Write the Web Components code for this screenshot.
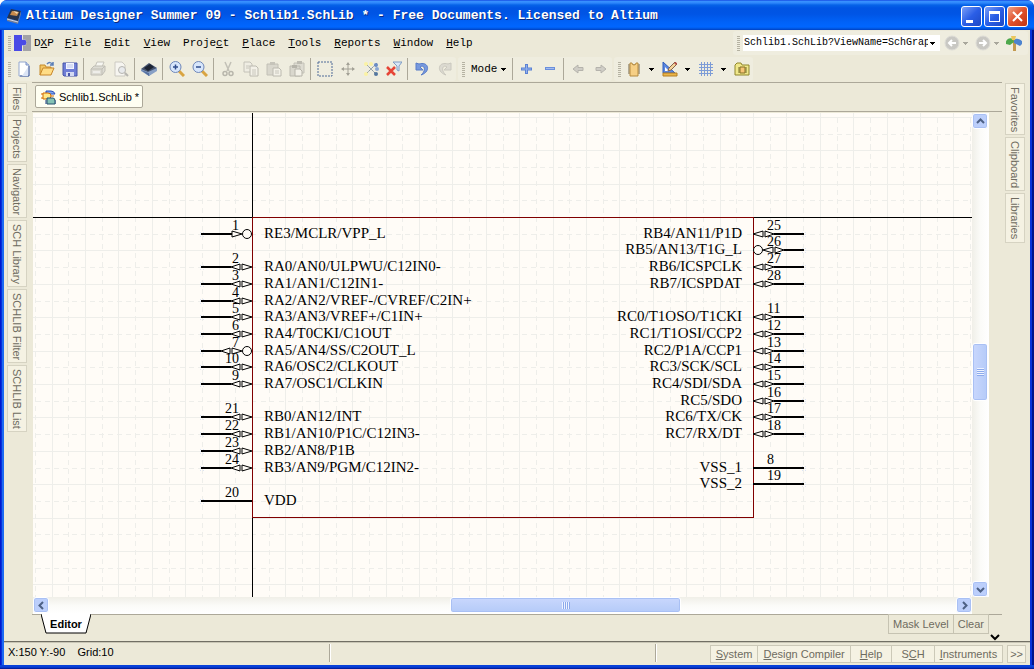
<!DOCTYPE html>
<html lang="en">
<head>
<meta charset="utf-8">
<title>Altium Designer Summer 09</title>
<style>
  html, body { margin: 0; height: 100%; }
  body { background: #fff; }
</style>
</head>
<body>
<app-window></app-window>

<script>
const ICONS = {
  app: `<path d="M1 10 5 1l10 2-3 10z" fill="#26324c"/><path d="M1 10l11 3 3-10v3l-3 10L1 13z" fill="#6d7c9b"/><path d="M6 3l7 1-2 4-7-1z" fill="#c98a4b"/><path d="M7 3l5 1-1 2z" fill="#f4d9b0"/><path d="M1 11l11 3" stroke="#cfd6e4" fill="none"/>`,
  dxp: `<path d="M0 0h8v5a3 3 0 1 1 0 5v6H0z" fill="#4a4ae6"/><path d="M9 0h8v16H9v-5a3.500 3.500 0 0 0 0-7z" fill="#a2a2a6"/>`,
  new: `<path d="M3 1h7l3 3v11H3z" fill="#fff" stroke="#93a7cf"/><path d="M13 5v10H4" stroke="#4a63a0" fill="none"/><path d="M10 1v3h3" fill="#c5d3ef" stroke="#7c92c4"/><path d="M6 15l6-9v9z" fill="#dbe4f5"/>`,
  open: `<path d="M1 14V4h5l1 2h5v2" fill="#f3c765" stroke="#c48a2a"/><path d="M1 14l3-7h11l-3 7z" fill="#ffdd86" stroke="#c8862a"/><path d="M8 3c2-2 4-2 6 1m0-3v3h-3" stroke="#5b7fb8" stroke-width="1.500" fill="none"/>`,
  save: `<path d="M1 2h14v13H2l-1-1z" fill="#6f7ed6" stroke="#4654a8"/><path d="M4 2h8v6H4z" fill="#f3f5ff"/><path d="M5 4h6M5 6h6" stroke="#b9c4ea"/><path d="M4 11h8v4H4z" fill="#d4daf2"/><path d="M6 12h2v3H6z" fill="#4654a8"/>`,
  print: `<path d="M5 6l2-5h7l-2 5" fill="#f7f7f2" stroke="#c6c4bb"/><path d="M1 8l3-3h11v5l-3 4H1z" fill="#dddcd4" stroke="#c0beb5"/><path d="M1 8h11v6M12 8l3-3" stroke="#c0beb5" fill="none"/><path d="M3 11h7" stroke="#fff"/>`,
  preview: `<path d="M2 1h7l3 3v11H2z" fill="#f6f5f0" stroke="#cccac2"/><circle cx="9" cy="9" r="3.500" fill="#e8eaec" stroke="#b6b5b0"/><path d="M12 12l3 3" stroke="#b6b5b0" stroke-width="2"/>`,
  browse: `<path d="M0 8l8-6 8 5-8 8z" fill="#45536f"/><path d="M3 7l6-4 4 3-6 4z" fill="#1d2433"/><path d="M0 8l7 3 9-4v3l-8 5-8-5z" fill="#88a0c6"/><path d="M0 9l8 3v3z" fill="#5570a0"/>`,
  zin: `<path d="M10 10l5 5" stroke="#d9a441" stroke-width="3"/><circle cx="6.500" cy="6" r="5.500" fill="#d7e6fb" stroke="#6f87b8"/><path d="M4 6h5M6.500 3.500v5" stroke="#2f4c8c" stroke-width="1.500"/>`,
  zout: `<path d="M10 10l5 5" stroke="#d9a441" stroke-width="3"/><circle cx="6.500" cy="6" r="5.500" fill="#d7e6fb" stroke="#6f87b8"/><path d="M4 6h5" stroke="#2f4c8c" stroke-width="1.500"/>`,
  cut: `<path d="M5 1l4 9M11 1l-4 9" stroke="#c2c0b6" stroke-width="1.500"/><circle cx="5" cy="12.500" r="2" fill="none" stroke="#b8b6ac" stroke-width="1.500"/><circle cx="11" cy="12.500" r="2" fill="none" stroke="#b8b6ac" stroke-width="1.500"/>`,
  copy: `<path d="M1 1h6l2 2v8H1z" fill="#efede3" stroke="#c4c2b8"/><path d="M7 5h6l2 2v8H7z" fill="#f3f1e8" stroke="#bcbab0"/><path d="M3 5h4M3 7h3M9 9h4M9 11h4M9 13h4" stroke="#c8c6bc"/>`,
  paste: `<path d="M1 3h11v11H1z" fill="#d9d7cd" stroke="#c2c0b6"/><path d="M4 1h5v3H4z" fill="#c6c4ba"/><path d="M7 7h6l2 2v6H7z" fill="#f3f1e8" stroke="#bcbab0"/><path d="M9 10h4M9 12h4" stroke="#c8c6bc"/>`,
  paste2: `<path d="M5 2h10v10H5z" fill="#dedcd2" stroke="#c4c2b8"/><path d="M8 0h5v3H8z" fill="#bebcb2"/><path d="M1 5h10v10H1z" fill="#d9d7cd" stroke="#bcbab0"/><path d="M3 4h5v3H3z" fill="#b6b4aa"/><path d="M6 8h5l2 2v5H6z" fill="#f3f1e8" stroke="#b6b4aa"/>`,
  select: `<path d="M1 1h14v14H1z" fill="none" stroke="#4e6b98" stroke-dasharray="2 1"/>`,
  move: `<path d="M8 2v12M2 8h12" stroke="#a3a196"/><path d="M6 4l2-3 2 3zM6 12l2 3 2-3zM4 6L1 8l3 2zM12 6l3 2-3 2z" fill="#a3a196"/>`,
  desel: `<path d="M2 2l6 6-6 6M14 2L8 8l6 6" stroke="#6d8092" stroke-dasharray="2 1" fill="none"/><circle cx="3" cy="3" r="2" fill="#fbf2a4"/><circle cx="3" cy="13" r="2" fill="#fbf2a4"/><circle cx="8" cy="3" r="2" fill="#fbf2a4"/><circle cx="13" cy="4" r="2" fill="#6b8cc4"/><circle cx="14" cy="8" r="2" fill="#8ba7d3"/><circle cx="13" cy="13" r="2" fill="#54779f"/>`,
  clear: `<path d="M7 1h9l-3 4v5l-2-1V5z" fill="#d9e6f7" stroke="#7e9cc4"/><path d="M1 6l8 8M9 6l-8 8" stroke="#e64436" stroke-width="2.500"/>`,
  undo: `<path d="M2 2v7h7L6 6c4-3 7 3 1 8 10-3 8-14-2-11z" fill="#7799de" stroke="#587cc8"/>`,
  redo: `<path d="M14 2v7H7l3-3C6 3 3 9 9 14-1 11 1 0 11 3z" fill="#dcdad1" stroke="#cac8be"/>`,
  plus: `<path d="M6 3h3v3.500h4v3H9V13H6V9.500H2v-3h4z" fill="#5b82d4"/><path d="M7.500 4v8M3 8h9" stroke="#93b1ec"/>`,
  minus: `<path d="M3 6h10v3H3z" fill="#6a8fdc"/><path d="M4 7.500h8" stroke="#a3bcee"/>`,
  left: `<path d="M3 8l5-4v2.500h5v3H8V12z" fill="#cfcdc6" stroke="#b5b3ac"/>`,
  right: `<path d="M13 8L8 4v2.500H3v3h5V12z" fill="#cfcdc6" stroke="#b5b3ac"/>`,
  part: `<path d="M2 4h12M2 6h12M2 8h12M2 10h12M2 12h12" stroke="#75664a"/><path d="M4 2h2a2 2 0 0 0 4 0h2v13H4z" fill="#f6cf85" stroke="#b58a3e"/>`,
  draw: `<path d="M1 1v11h12z" fill="#5b87e0" stroke="#2f5dbc"/><path d="M3 6v4h4z" fill="#fff"/><path d="M6 10l1-3 6-6 2 2-6 6z" fill="#f3d39b" stroke="#86644a"/><path d="M12 2l2-1 1 2-1 1z" fill="#b64a4a"/><path d="M1 12h14v3H1z" fill="#eab548" stroke="#b57f23"/>`,
  grid: `<path d="M3.500 1v14M6.500 1v14M9.500 1v14M12.500 1v14M1 3.500h14M1 6.500h14M1 9.500h14M1 12.500h14" stroke="#7d9cd6" fill="none"/>`,
  folder: `<path d="M1 4l2-2h4l1 2h7v10H1z" fill="#f0e88c" stroke="#8f862c"/><path d="M4 7h9M4 9h9M4 11h9" stroke="#75702e"/><path d="M6 6h5v6H6z" fill="#f7c477" stroke="#857026"/>`,
  back: `<circle cx="8" cy="8" r="7" fill="#c9c8c3" stroke="#dddcd6"/><path d="M12 8H5M8 5L5 8l3 3" stroke="#fff" stroke-width="2" fill="none"/>`,
  forward: `<circle cx="8" cy="8" r="7" fill="#c9c8c3" stroke="#dddcd6"/><path d="M4 8h7M8 5l3 3-3 3" stroke="#fff" stroke-width="2" fill="none"/>`,
  tree: `<path d="M7 4h3v12H7z" fill="#c49a4f"/><path d="M0 9c-1-4 3-7 7-5l1 3-4 3z" fill="#4ea84c"/><path d="M8 5c3-3 8 0 9 3l-3 3-6-3z" fill="#4d84cf"/><path d="M5 1h5l-1 4H6z" fill="#eac65c"/>`,
  doc: `<path d="M6 2h5q3 0 4 3h-9z" fill="#7fa5f0" stroke="#2b50b8"/><path d="M1 5h2M1 9h2M11 7h3" stroke="#d26b00"/><path d="M3 4h5q3 0 3 3t-3 3H3z" fill="#ffe98a" stroke="#d26b00"/><path d="M5 12h11M5 14h11" stroke="#1d3c86"/><path d="M7 9h6q2 0 2 3v3H7z" fill="#84c2b4" stroke="#27506e"/>`
};
const icon = (n, w = 16) => `<svg width="${w}" height="16" viewBox="0 0 ${w} 16" aria-hidden="true">${ICONS[n]}</svg>`;

const BASE = `<style>
  *, *::before { box-sizing: border-box; }
  button { font: inherit; color: inherit; margin: 0; padding: 0; border: 0; background: none; cursor: default; }
  svg { display: block; flex: none; }
</style>`;
const MONO = '"Liberation Mono", monospace';
const SANS = '"Liberation Sans", sans-serif';

function define(name, render) {
  customElements.define(name, class extends HTMLElement {
    connectedCallback() {
      if (this.shadowRoot) return;
      this.attachShadow({ mode: 'open' }).innerHTML = BASE + render(this);
    }
  });
}

/* Push button holding one 16px glyph */
define('icon-button', el => `<style>
  :host { display: block; flex: none; }
  button { display: flex; align-items: center; justify-content: center; width: 23px; height: 22px; }
</style><button aria-label="${el.getAttribute('label')}">${icon(el.getAttribute('name'))}</button>`);

/* Small drop-down triangle next to a tool */
define('drop-arrow', el => `<style>
  :host { display: block; flex: none; color: #000; }
  :host([dim]) { color: #a9a79c; }
  button { display: flex; align-items: center; justify-content: center; width: 13px; height: 22px; }
</style><button aria-label="More"><svg width="5" height="3" shape-rendering="crispEdges"><path d="M0 0h5L2.500 3z" fill="currentColor"/></svg></button>`);

define('tool-group', () => `<style>
  :host { display: flex; align-items: center; height: 24px; background: #efeddf; border-radius: 3px; }
  .grip { flex: none; width: 3px; height: 15px; margin: 0 1px 0 4px;
    background: repeating-linear-gradient(#b5b2a2 0 1px, transparent 1px 2px); }
</style><span class="grip"></span><slot></slot>`);

define('tool-sep', () => `<style>
  :host { display: block; flex: none; width: 5px; height: 22px; }
  i { display: block; width: 1px; height: 22px; margin-left: 2px; background: #aca899; }
</style><i></i>`);

define('title-bar', () => `<style>
  :host { display: flex; align-items: center; height: 30px; padding: 2px 6px 0 6px; border-radius: 7px 7px 0 0;
    background: linear-gradient(#0831d9 0, #3a93ff 1px, #2d86fb 3px, #0663e8 5px, #0054e3 8px, #0055e5 14px, #0062f8 22px, #0066ff 27px, #0051d8 29px, #003ec0 30px); }
  h1 { flex: 1; margin: 0 0 0 4px; font: bold 13px/16px ${MONO}; color: #fff; text-shadow: 1px 1px 0 #0a2a80; white-space: nowrap; overflow: hidden; }
  .ctl { display: flex; gap: 2px; }
  .ctl button { width: 21px; height: 21px; border: 1px solid #fff; border-radius: 3px;
    background: linear-gradient(135deg, #7b9ff8, #2a5ee6 50%, #1d48c4); display: grid; place-items: center; }
  .ctl .x { background: linear-gradient(135deg, #f0a287, #e0502b 50%, #bf3512); }
</style>
${icon('app')}<h1>Altium Designer Summer 09 - Schlib1.SchLib * - Free Documents. Licensed to Altium</h1>
<div class="ctl">
  <button aria-label="Minimize"><svg width="15" height="15"><path d="M2 11h7v3H2z" fill="#fff"/></svg></button>
  <button aria-label="Maximize"><svg width="15" height="15" shape-rendering="crispEdges"><path d="M2 2h11v11H2zM3 5v7h9V5z" fill="#fff" fill-rule="evenodd"/></svg></button>
  <button class="x" aria-label="Close"><svg width="15" height="15"><path d="M3 3l9 9M12 3l-9 9" stroke="#fff" stroke-width="2"/></svg></button>
</div>`);

define('menu-bar', () => `<style>
  :host { display: flex; align-items: center; height: 26px; padding: 0 2px 0 0; font: 11px/14px ${MONO}; color: #000; }
  nav { display: flex; align-items: center; gap: 13px; flex: 1; padding-left: 4px; }
  .grip { width: 3px; height: 15px; margin-right: -10px; background: repeating-linear-gradient(#b5b2a2 0 1px, transparent 1px 2px); }
  .dxp { display: flex; align-items: center; gap: 3px; margin-right: -2px; }
  select { appearance: none; width: 197px; height: 16px; margin-left: 2px; padding: 0 12px 0 1px; border: 0; border-radius: 0; color: #000;
    font: 10px/16px ${MONO}; background: linear-gradient(#000, #000) no-repeat right 5px top 7px / 5px 1px,
      linear-gradient(#000, #000) no-repeat right 6px top 8px / 3px 1px, linear-gradient(#000, #000) no-repeat right 7px top 9px / 1px 1px, #fff; }
  tool-group { padding-right: 7px; }
  icon-button { margin-right: -4px; }
  drop-arrow { margin-right: -1px; }
</style>
<nav aria-label="Main menu">
  <span class="grip"></span>
  <button class="dxp">${icon('dxp', 17)}<span>D<u>X</u>P</span></button>
  <button><u>F</u>ile</button><button><u>E</u>dit</button><button><u>V</u>iew</button><button>Proje<u>c</u>t</button>
  <button><u>P</u>lace</button><button><u>T</u>ools</button><button><u>R</u>eports</button><button><u>W</u>indow</button><button><u>H</u>elp</button>
</nav>
<tool-group>
  <select aria-label="Document address"><option>Schlib1.SchLib?ViewName=SchGrap</option></select>
  <icon-button name="back" label="Back"></icon-button><drop-arrow dim></drop-arrow>
  <icon-button name="forward" label="Forward"></icon-button><drop-arrow dim></drop-arrow>
  <icon-button name="tree" label="Home"></icon-button>
</tool-group>`);

define('tool-bar', () => {
  const b = (n, l) => `<icon-button name="${n}" label="${l}"></icon-button>`, s = '<tool-sep></tool-sep>', d = '<drop-arrow></drop-arrow>';
  return `<style>
  :host { display: flex; align-items: center; gap: 2px; height: 26px; font: 11px/14px ${MONO}; color: #000; }
  .mode { display: flex; align-items: center; gap: 4px; height: 22px; padding: 0 4px 0 5px; }
</style>
<tool-group>${b('new','New')}${b('open','Open')}${b('save','Save')}${s}${b('print','Print')}${b('preview','Print preview')}${s}${b('browse','Device view')}${s}${b('zin','Zoom in')}${b('zout','Zoom out')}${s}${b('cut','Cut')}${b('copy','Copy')}${b('paste','Paste')}${b('paste2','Paste array')}${s}${b('select','Select inside')}${b('move','Move')}${b('desel','Deselect')}${b('clear','Clear filter')}${s}${b('undo','Undo')}${b('redo','Redo')}</tool-group>
<tool-group><button class="mode">Mode<svg width="5" height="3" shape-rendering="crispEdges"><path d="M0 0h5L2.500 3z"/></svg></button>${s}${b('plus','Add')}${b('minus','Remove')}${s}${b('left','Previous')}${b('right','Next')}</tool-group>
<tool-group>${b('part','IEEE symbols')}${d}${b('draw','Drawing tools')}${d}${b('grid','Grids')}${d}${b('folder','Model manager')}</tool-group>`;
});

/* Column of vertical panel tabs; the labels come from the "tabs" attribute */
define('side-dock', el => `<style>
  :host { display: flex; flex-direction: column; gap: 2px; flex: none; width: 28px; padding: 1px 0 0 3px; font: 11px/16px ${SANS}; color: #6e6b60; }
  button { writing-mode: vertical-rl; width: 20px; padding: 3px 0 2px; text-align: left; line-height: 16px; background: #f5f2e3; border: 1px solid #d6d3c2; }
</style>${el.getAttribute('tabs').split(',').map(t => `<button>${t}</button>`).join('')}`);

define('doc-tabs', () => `<style>
  :host { display: flex; align-items: flex-start; height: 30px; padding: 2px 3px 0; border-top: 1px solid #aca899; border-bottom: 1px solid #aca899; }
  button { display: flex; align-items: center; gap: 3px; height: 23px; padding: 0 3px 0 4px; background: #fffff2; border: 1px solid #aca899; border-radius: 2px; font: 11px/14px ${SANS}; }
</style><button>${icon('doc')}Schlib1.SchLib *</button>`);

define('xp-scrollbar', el => {
  const v = el.hasAttribute('vertical'), [a, t, c] = el.getAttribute('ratio').split(',');
  const chev = d => `<svg width="9" height="9" viewBox="0 0 9 9"><path d="${d}" fill="none" stroke="#4d6185" stroke-width="2"/></svg>`;
  return `<style>
  :host { display: flex; flex-direction: ${v ? 'column' : 'row'}; flex: none; ${v ? 'width' : 'height'}: 17px; padding: ${v ? '0 1px 0 0' : '0 0 1px'};
    background: linear-gradient(${v ? '90deg' : '180deg'}, #f0efe8, #fbfbf8 50%, #fff); }
  button, .thumb { flex: none; border: 1px solid #fff; border-radius: 3px; background: #bccffb; box-shadow: inset 0 0 0 1px #a9c0f4; }
  button { width: 16px; height: 16px; display: grid; place-items: center; }
  .track { flex: 1; display: grid; grid-template-${v ? 'rows' : 'columns'}: ${a}fr ${t}fr ${c}fr; }
  .thumb { ${v ? 'grid-row' : 'grid-column'}: 2; display: grid; place-items: center;
    background: linear-gradient(${v ? '90deg' : '180deg'}, #c9d7fd, #b5cbf8); }
  .thumb i { ${v ? 'width: 7px; height: 8px' : 'width: 8px; height: 7px'};
    background: repeating-linear-gradient(${v ? '180deg' : '90deg'}, #eef3ff 0 1px, #8caaec 1px 2px); }
  </style>
  <button aria-label="${v ? 'Scroll up' : 'Scroll left'}">${chev(v ? 'M1 6l3.500-3.500L8 6' : 'M6 1L2.500 4.500 6 8')}</button>
  <div class="track"><div class="thumb" role="scrollbar" aria-label="Scroll position"><i></i></div></div>
  <button aria-label="${v ? 'Scroll down' : 'Scroll right'}">${chev(v ? 'M1 3l3.500 3.500L8 3' : 'M3 1l3.500 3.500L3 8')}</button>`;
});

/* Component drawing: 10-unit pitch, pins on both sides of the body */
define('schematic-canvas', () => {
  const STEP = 501 / 30, at = n => Math.round(n * STEP);
  const LEFT = [[1,1,'RE3/MCLR/VPP_L','in'],[3,2,'RA0/AN0/ULPWU/C12IN0-'],[4,3,'RA1/AN1/C12IN1-'],[5,4,'RA2/AN2/VREF-/CVREF/C2IN+'],
    [6,5,'RA3/AN3/VREF+/C1IN+'],[7,6,'RA4/T0CKI/C1OUT'],[8,7,'RA5/AN4/SS/C2OUT_L','dot'],[9,10,'RA6/OSC2/CLKOUT'],[10,9,'RA7/OSC1/CLKIN'],
    [12,21,'RB0/AN12/INT'],[13,22,'RB1/AN10/P1C/C12IN3-'],[14,23,'RB2/AN8/P1B'],[15,24,'RB3/AN9/PGM/C12IN2-'],[17,20,'VDD','power']];
  const RIGHT = [[1,25,'RB4/AN11/P1D'],[2,26,'RB5/AN13/T1G_L','dot'],[3,27,'RB6/ICSPCLK'],[4,28,'RB7/ICSPDAT'],
    [6,11,'RC0/T1OSO/T1CKI'],[7,12,'RC1/T1OSI/CCP2'],[8,13,'RC2/P1A/CCP1'],[9,14,'RC3/SCK/SCL'],[10,15,'RC4/SDI/SDA'],
    [11,16,'RC5/SDO'],[12,17,'RC6/TX/CK'],[13,18,'RC7/RX/DT'],[15,8,'VSS_1','power'],[16,19,'VSS_2','power']];
  let solid = '', dashed = '';
  for (let i = -14; i < 100; i++) {
    const p = at(i);
    if (i % 2) dashed += `M${p}-1000V2000M-1000 ${p}H3000`; else solid += `M${p}-1000V2000M-1000 ${p}H3000`;
  }
  /* Symbols are drawn for a left pin, with the body edge at x = 0 */
  const bidi = o => `<path class="s" d="M${o - 21} 0l9-3v6zM${o} 0l-10-3v6z"/>`;
  const sym = k => k === 'power' ? '' : k === 'in' ? '<path class="s" d="M-10 0l-10-3v6z"/><circle class="s" cx="-5" cy="0" r="4.500"/>'
    : k === 'dot' ? bidi(-10) + '<circle class="s" cx="-5" cy="0" r="4.500"/>' : bidi(0);
  const end = { power: 0, in: -20, dot: -31 };
  const pin = k => `<path d="M-52-2v5M-49-2v5" stroke="#dde5f4" stroke-dasharray="1 1"/><path class="w" d="M-51 0H${k ? end[k] : -21}"/>${sym(k)}`;
  const left = LEFT.map(([r, n, t, k]) => `<g transform="translate(0 ${at(r)})">${pin(k)}<text x="-13" y="-4" class="n" text-anchor="end">${n}</text><text x="12" y="4">${t}</text></g>`).join('');
  const right = RIGHT.map(([r, n, t, k]) => `<g transform="translate(501 ${at(r)})"><g transform="scale(-1 1)">${pin(k)}</g><text x="14" y="-4" class="n">${n}</text><text x="-11" y="4" text-anchor="end">${t}</text></g>`).join('');
  return `<style>
  :host { display: block; flex: 1; min-width: 0; overflow: hidden; background: #fffcf7; contain: size; }
  svg { width: 100%; height: 100%; }
  path { fill: none; shape-rendering: crispEdges; }
  .s { fill: #fffcf7; stroke: #000; shape-rendering: auto; }
  .w { stroke: #000; stroke-width: 2; }
  text { font: 15px "Liberation Serif", serif; fill: #000; }
  .n { font-size: 14px; }
  </style>
  <svg role="img" aria-label="Component symbol"><g transform="translate(219 104)">
    <g transform="translate(.5 .5)"><path d="${solid}" stroke="#eeeeea"/><path d="${dashed}" stroke="#eeeeea" stroke-dasharray="5 4"/>
    <path d="M0-1000V2000M-1000 0H3000" stroke="#000"/><path d="M0 0H501V300H0z" stroke="#800000"/></g>
    ${left}${right}
  </g></svg>`;
});

define('view-tabs', () => `<style>
  :host { display: flex; align-items: flex-start; height: 27px; padding: 0 2px 0 9px; border-top: 1px solid #aca899; font: 11px/14px ${SANS}; color: #6e6b60; }
  .editor { display: grid; place-items: center; width: 50px; height: 20px; margin-top: -1px; color: #000; font-weight: bold; }
  .editor svg, .editor span { grid-area: 1 / 1; }
  .gap { flex: 1; }
  .mask { height: 20px; margin: -1px 0 0 -1px; padding: 0 4px; border: 1px solid #c6c3b2; white-space: nowrap; background: #ece9d8; }
  .more { align-self: flex-end; margin-left: 1px; }
</style>
<button class="editor"><svg width="50" height="20"><path d="M0 0l5 19h40l5-19z" fill="#fff"/><path d="M0 0l5 19h40l5-19" fill="none" stroke="#000"/></svg><span>Editor</span></button>
<span class="gap"></span><button class="mask">Mask Level</button><button class="mask">Clear</button>
<button class="more" aria-label="More"><svg width="10" height="8"><path d="M1 2l4 4 4-4" fill="none" stroke="#000" stroke-width="2"/></svg></button>`);

define('status-bar', () => `<style>
  :host { display: grid; grid-template-columns: 326fr 326fr 374fr; height: 24px; padding-top: 2px; border-top: 1px solid #716f64; box-shadow: inset 0 1px #c9c6b5;
    font: 11px/16px ${SANS}; color: #000; }
  .cell { height: 18px; padding-left: 4px; border-right: 1px solid #aca899; box-shadow: 1px 0 #fff; white-space: pre; }
  .panels { display: flex; justify-content: flex-end; align-items: flex-start; padding: 1px 4px 0 0; color: #6e6b60; }
  button { height: 18px; margin-left: -1px; padding: 0 5px; line-height: 16px; background: #f5f2e3; border: 1px solid #ccc9b8; white-space: nowrap; }
  .wide { padding: 0 9px; }
  .last { margin-left: 4px; padding: 0 2px; }
</style>
<div class="cell">X:150 Y:-90    Grid:10</div><div class="cell"></div>
<div class="panels"><button><u>S</u>ystem</button><button><u>D</u>esign Compiler</button><button class="wide"><u>H</u>elp</button><button class="wide">S<u>C</u>H</button><button><u>I</u>nstruments</button><button class="last">&gt;&gt;</button></div>`);

define('app-window', () => `<style>
  :host { display: flex; flex-direction: column; min-height: 100vh; border-radius: 7px 7px 0 0; overflow: hidden;
    background: linear-gradient(90deg, #0019cf 0 1px, #0831d9 1px 2px, #1c6af2 2px 4px, transparent 4px), linear-gradient(270deg, #00138c 0 2px, #0831d9 2px 4px, transparent 4px), #0841d9; }
  main { flex: 1; display: flex; flex-direction: column; margin: 0 4px; background: #ece9d8; }
  .work { flex: 1; display: flex; }
  .center { flex: 1; min-width: 0; display: flex; flex-direction: column; }
  .row { display: flex; padding: 0 13px 0 1px; }
  .edit { flex: 1; padding-top: 1px; }
  .hs { padding-right: 30px; }
  .hs xp-scrollbar { flex: 1; }
  footer { height: 4px; background: linear-gradient(#0841d9 50%, #00138c); }
</style>
<title-bar></title-bar>
<main>
  <menu-bar></menu-bar>
  <tool-bar></tool-bar>
  <div class="work">
    <side-dock tabs="Files,Projects,Navigator,SCH Library,SCHLIB Filter,SCHLIB List"></side-dock>
    <div class="center">
      <doc-tabs></doc-tabs>
      <div class="row edit"><schematic-canvas></schematic-canvas><xp-scrollbar vertical ratio="214,58,180"></xp-scrollbar></div>
      <div class="row hs"><xp-scrollbar ratio="401,230,275"></xp-scrollbar></div>
      <view-tabs></view-tabs>
    </div>
    <side-dock tabs="Favorites,Clipboard,Libraries"></side-dock>
  </div>
  <status-bar></status-bar>
</main>
<footer></footer>`);
</script>
</body>
</html>
